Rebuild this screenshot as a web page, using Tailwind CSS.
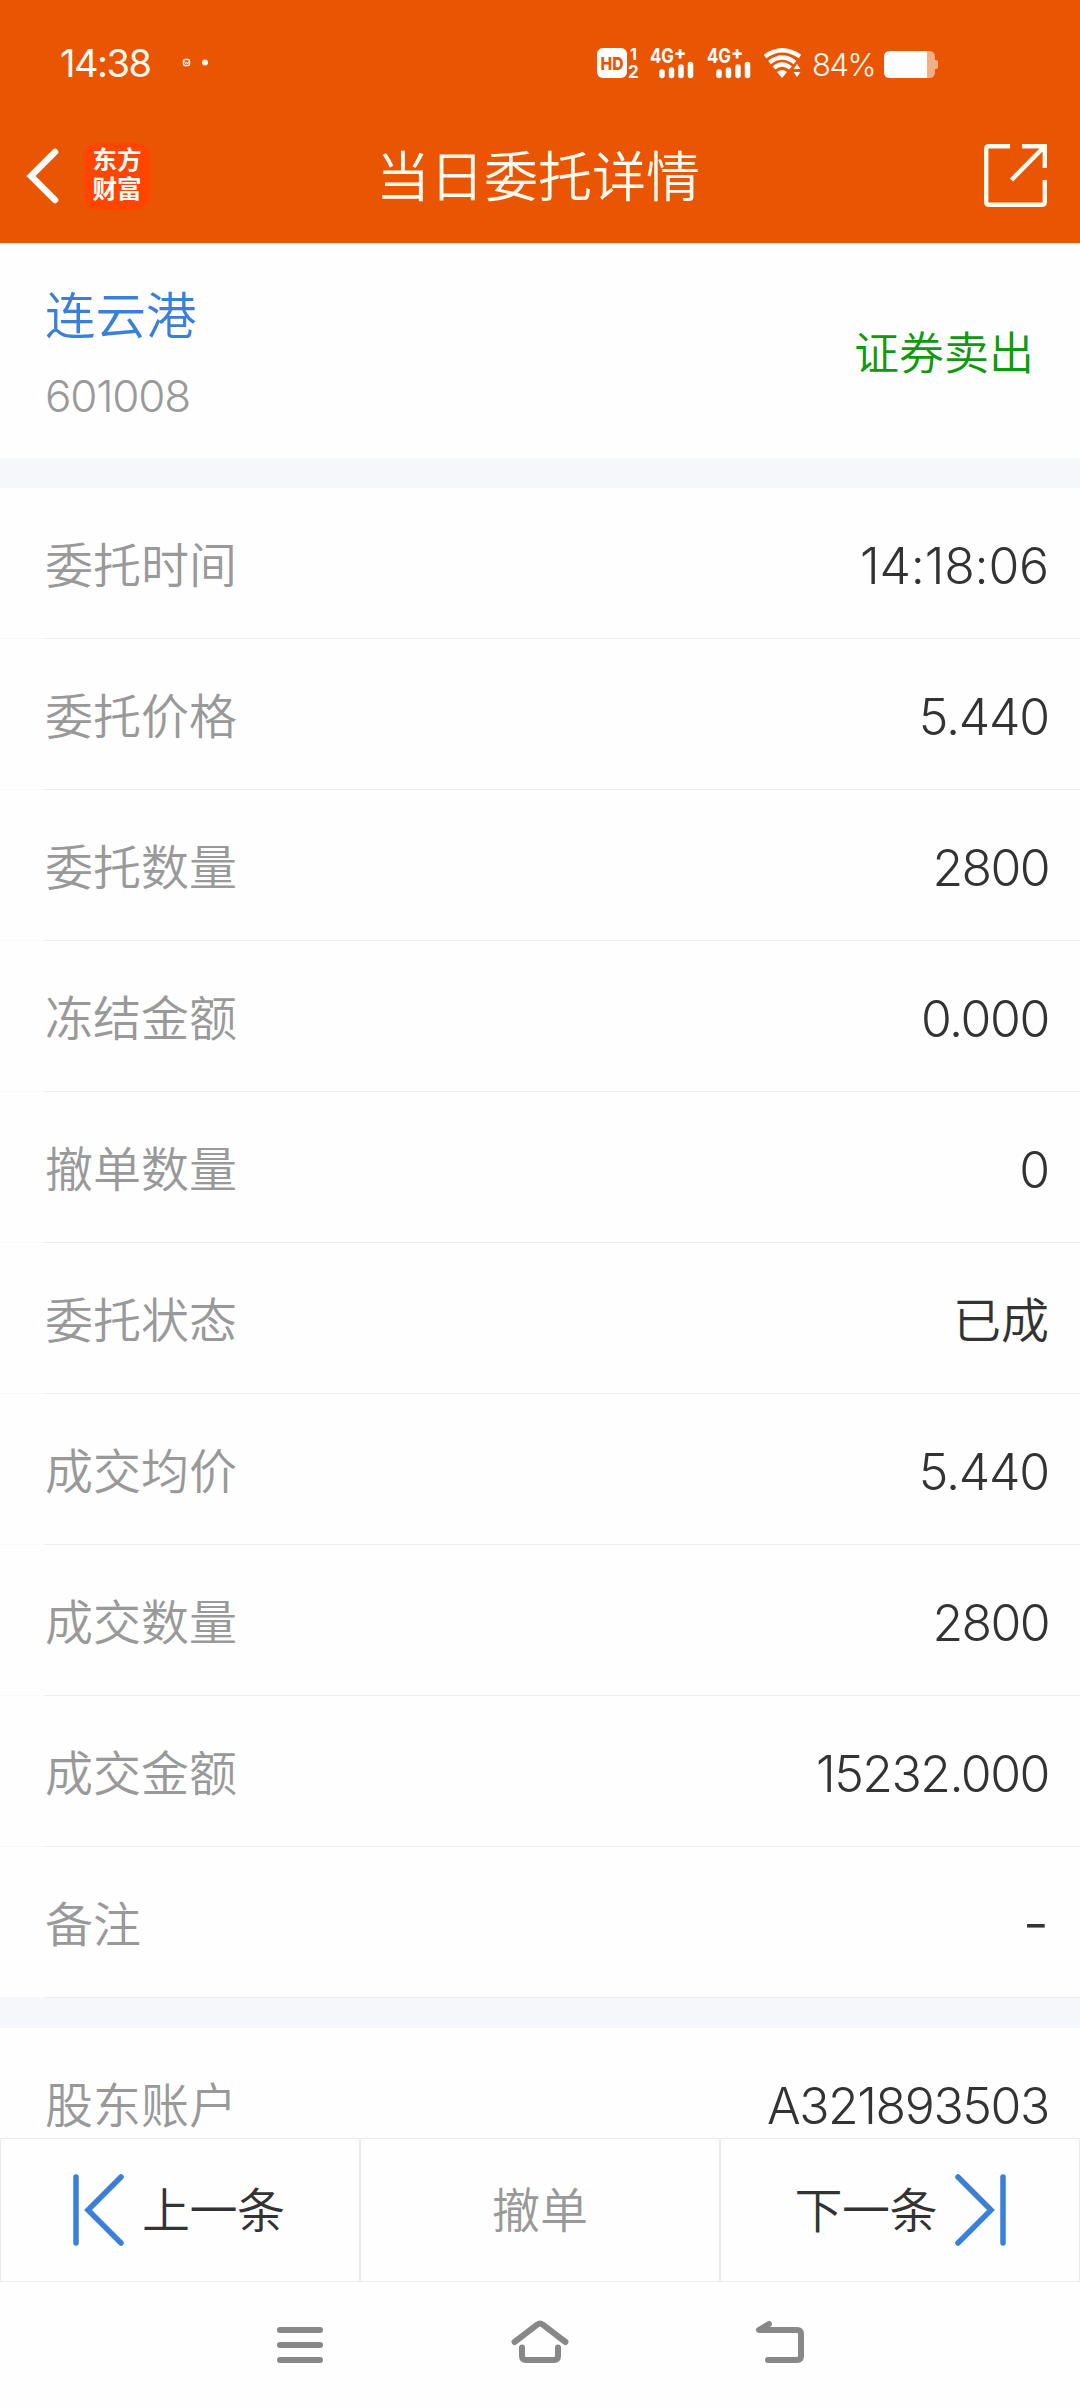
<!DOCTYPE html>
<html lang="zh-CN">
<head>
	<meta charset="UTF-8">
	<meta name="viewport" content="width=device-width, initial-scale=1.0">
	<title>当日委托详情</title>
	<script src="https://cdn.jsdelivr.net/npm/@tailwindcss/browser@4"></script>
</head>
<body class="bg-white">
	<div class="w-[1080px] h-[2408px] flex flex-col overflow-hidden bg-[#fefefe] font-['Inter','Noto_Sans_CJK_SC',sans-serif] font-[350] text-[#333]">
		<header class="h-[243px] shrink-0 bg-[#ea5504] text-[#fffaf0]">
			<!-- Status bar -->
			<div class="h-[126px] pl-[60px] flex items-center">
				<span class="w-[92px] text-[38px] leading-none font-normal tracking-[-1.5px]">14:38</span>
				<svg class="ml-[30px]" width="28" height="10" viewBox="0 0 28 10">
					<rect x="1.5" y="1.5" width="6" height="6" rx="1.5" fill="none" stroke="#fffaf0" stroke-width="1.4" />
					<path d="M2.5 3l1.2 3 1-2 1 2 1.2-3" fill="none" stroke="#fffaf0" stroke-width=".8" />
					<circle cx="23" cy="4.5" r="3" fill="#fffaf0" />
				</svg>
				<svg class="ml-[387px] overflow-visible" width="43" height="30" viewBox="0 0 43 30">
					<rect width="30" height="30" rx="6" fill="#fff" />
					<text x="3.500" y="21.500" font-size="18" font-weight="800" fill="#ea5504" textLength="23" lengthAdjust="spacingAndGlyphs">HD</text>
					<text x="33" y="11.500" font-size="16" font-weight="700" fill="#fff">1</text>
					<text x="31" y="29.500" font-size="17" font-weight="700" fill="#fff">2</text>
				</svg>
				<svg class="ml-[10px] overflow-visible" width="46" height="30" viewBox="0 0 46 30">
					<text x="0" y="14.5" font-size="20" font-weight="700" fill="#fff" textLength="24" lengthAdjust="spacingAndGlyphs">4G</text>
					<text x="24" y="11" font-size="18" font-weight="800" fill="#fff">+</text>
					<path d="M12 24v3.5M21.500 22v5.500M31 19v8.500M40.500 16.500v11" fill="none" stroke="#fff" stroke-width="5.500" stroke-linecap="round" />
				</svg>
				<svg class="ml-[11px] overflow-visible" width="46" height="30" viewBox="0 0 46 30">
					<text x="0" y="14.5" font-size="20" font-weight="700" fill="#fff" textLength="24" lengthAdjust="spacingAndGlyphs">4G</text>
					<text x="24" y="11" font-size="18" font-weight="800" fill="#fff">+</text>
					<path d="M12 24v3.5M21.500 22v5.500M31 19v8.500M40.500 16.500v11" fill="none" stroke="#fff" stroke-width="5.500" stroke-linecap="round" />
				</svg>
				<svg class="ml-[11px]" width="38" height="30" viewBox="0 0 38 30">
					<path d="M1 8.500Q18 -4 36 8.500M5.500 14.500Q18 4.500 31 14.500M10 20Q18 13 26.500 20" fill="none" stroke="#fff" stroke-width="4.200" />
					<path d="M13 24q5-4 10 0l-5 6z" fill="#fff" />
					<path d="M33 16l3.500 5h-7zM33 29l3.500-5h-7z" fill="#fff" />
				</svg>
				<span class="ml-[10px] w-[62px] text-[31px] leading-none tracking-[-1.5px] pt-[2px]">84%</span>
				<svg class="ml-[10px] mt-[3px]" width="54" height="27" viewBox="0 0 54 27">
					<path d="M43 0h2q6 0 6 6v3h1q2 0 2 2v5q0 2-2 2h-1v3q0 6-6 6h-2z" fill="#f7ad84" />
					<path d="M6 0h37v27H6q-6 0-6-6V6q0-6 6-6z" fill="#fff" />
				</svg>
			</div>
			<!-- Title bar -->
			<div class="h-[100px] grid grid-cols-[1fr_auto_1fr] items-center">
				<div class="flex items-center pl-[26px]">
					<svg width="34" height="56" viewBox="0 0 34 56">
						<path d="M29 4L5 28l24 24" fill="none" stroke="#fff" stroke-width="6.500" stroke-linecap="round" />
					</svg>
					<div class="ml-6 w-[66px] h-[67px] rounded-[14px] bg-[#ff4500] flex flex-col items-center justify-center pb-0.5 text-[24.5px] leading-[29.5px] font-bold text-white">
						<span>东方</span>
						<span>财富</span>
					</div>
				</div>
				<h1 class="pt-1 -ml-0.5 mr-0.5 text-[54px] leading-[60px]">当日委托详情</h1>
				<div class="flex justify-end pr-[33px] pb-0.5">
					<svg width="63" height="63" viewBox="0 0 63 63">
						<path d="M26 2.200H5Q2.200 2.200 2.200 5V58Q2.200 60.800 5 60.800H58Q60.800 60.800 60.800 58V36M38 2.200H60.800V24M60 3L27.500 36" fill="none" stroke="#fffaf0" stroke-width="4.400" />
					</svg>
				</div>
			</div>
		</header>

		<main class="h-[1895px] shrink-0 overflow-hidden">
			<section class="h-[215px] pt-1.5 px-[45px] flex items-center justify-between">
				<div class="flex flex-col">
					<span class="text-[50.5px] leading-[60px] text-[#3a80d9]">连云港</span>
					<span class="mt-6 text-[44px] leading-[52px] tracking-[-1.200px] text-[#999]">601008</span>
				</div>
				<span class="-mr-px pr-0.5 text-[45px] leading-none text-[#0f990f]">证券卖出</span>
			</section>
			<div class="h-[30px] bg-[#f6f7fa]"></div>

			<!-- Order fields -->
			<dl class="text-[48px] leading-none">
				<div class="h-[151px] flex">
					<div class="w-[45px] border-b border-[#f9f9fa]"></div>
					<div class="flex-1 pt-[5px] pr-[31px] flex items-center justify-between border-b border-[#ececee]">
						<dt class="text-[#999]">委托时间</dt>
						<dd class="text-[50px] tracking-[-.2px]">14:18:06</dd>
					</div>
				</div>
				<div class="h-[151px] flex">
					<div class="w-[45px] border-b border-[#f9f9fa]"></div>
					<div class="flex-1 pt-[5px] pr-[31px] flex items-center justify-between border-b border-[#ececee]">
						<dt class="text-[#999]">委托价格</dt>
						<dd class="text-[50px] tracking-[-1.200px]">5.440</dd>
					</div>
				</div>
				<div class="h-[151px] flex">
					<div class="w-[45px] border-b border-[#f9f9fa]"></div>
					<div class="flex-1 pt-[5px] pr-[31px] flex items-center justify-between border-b border-[#ececee]">
						<dt class="text-[#999]">委托数量</dt>
						<dd class="text-[50px] tracking-[-1.600px]">2800</dd>
					</div>
				</div>
				<div class="h-[151px] flex">
					<div class="w-[45px] border-b border-[#f9f9fa]"></div>
					<div class="flex-1 pt-[5px] pr-[31px] flex items-center justify-between border-b border-[#ececee]">
						<dt class="text-[#999]">冻结金额</dt>
						<dd class="text-[50px] tracking-[-1.400px]">0.000</dd>
					</div>
				</div>
				<div class="h-[151px] flex">
					<div class="w-[45px] border-b border-[#f9f9fa]"></div>
					<div class="flex-1 pt-[5px] pr-[31px] flex items-center justify-between border-b border-[#ececee]">
						<dt class="text-[#999]">撤单数量</dt>
						<dd class="text-[50px] tracking-[-1.200px]">0</dd>
					</div>
				</div>
				<div class="h-[151px] flex">
					<div class="w-[45px] border-b border-[#f9f9fa]"></div>
					<div class="flex-1 pt-[5px] pr-[31px] flex items-center justify-between border-b border-[#ececee]">
						<dt class="text-[#999]">委托状态</dt>
						<dd>已成</dd>
					</div>
				</div>
				<div class="h-[151px] flex">
					<div class="w-[45px] border-b border-[#f9f9fa]"></div>
					<div class="flex-1 pt-[5px] pr-[31px] flex items-center justify-between border-b border-[#ececee]">
						<dt class="text-[#999]">成交均价</dt>
						<dd class="text-[50px] tracking-[-1.200px]">5.440</dd>
					</div>
				</div>
				<div class="h-[151px] flex">
					<div class="w-[45px] border-b border-[#f9f9fa]"></div>
					<div class="flex-1 pt-[5px] pr-[31px] flex items-center justify-between border-b border-[#ececee]">
						<dt class="text-[#999]">成交数量</dt>
						<dd class="text-[50px] tracking-[-1.600px]">2800</dd>
					</div>
				</div>
				<div class="h-[151px] flex">
					<div class="w-[45px] border-b border-[#f9f9fa]"></div>
					<div class="flex-1 pt-[5px] pr-[31px] flex items-center justify-between border-b border-[#ececee]">
						<dt class="text-[#999]">成交金额</dt>
						<dd class="text-[50px] tracking-[-1.500px]">15232.000</dd>
					</div>
				</div>
				<div class="h-[151px] flex">
					<div class="w-[45px] border-b border-[#f6f7fa]"></div>
					<div class="flex-1 pt-[5px] pr-[31px] flex items-center justify-between border-b border-[#ececee]">
						<dt class="text-[#999]">备注</dt>
						<dd class="pb-1 text-[58px] font-light">-</dd>
					</div>
				</div>
			</dl>
			<div class="h-[30px] bg-[#f6f7fa]"></div>
			<div class="h-[151px] pl-[45px] pr-[31px] pt-1 flex items-center justify-between text-[48px] leading-none">
				<span class="text-[#999]">股东账户</span>
				<span class="text-[50px] tracking-[-1.400px]">A321893503</span>
			</div>
		</main>

		<!-- Order actions -->
		<div class="h-[144px] shrink-0 grid grid-cols-3 text-[48px] leading-none">
			<button class="border border-[#ececec] flex items-center pl-[71px]">
				<svg width="54" height="74" viewBox="0 0 54 74">
					<path d="M4 4v66M49 4L16 37l33 33" fill="none" stroke="#3a80d9" stroke-width="5.500" stroke-linecap="round" />
				</svg>
				<span class="ml-4 pt-0.5 tracking-[-.5px]">上一条</span>
			</button>
			<button class="border border-[#ececec] pt-0.5 text-[#999]">撤单</button>
			<button class="border border-[#ececec] flex items-center justify-end pr-[72px]">
				<span class="mr-4 pt-0.5 tracking-[-.5px]">下一条</span>
				<svg width="54" height="74" viewBox="0 0 54 74">
					<path d="M50 4v66M5 4l33 33L5 70" fill="none" stroke="#3a80d9" stroke-width="5.500" stroke-linecap="round" />
				</svg>
			</button>
		</div>

		<!-- System navigation -->
		<nav class="flex-1 pt-[36px] flex justify-center gap-[180px]">
			<svg width="60" height="50" viewBox="0 0 60 50">
				<path d="M10 12h40M10 27h40M10 42h40" fill="none" stroke="#888" stroke-width="6" stroke-linecap="round" />
			</svg>
			<svg width="60" height="50" viewBox="0 0 60 50">
				<path d="M4.500 24L27.500 6.500q2.500-2 5 0L55.500 24M12 29.500V38q0 4 4 4h28q4 0 4-4v-8.500" fill="none" stroke="#888" stroke-width="6" stroke-linecap="round" />
			</svg>
			<svg width="60" height="50" viewBox="0 0 60 50">
				<path d="M19 6L9 12H47q4 0 4 4V38q0 4-4 4H18" fill="none" stroke="#888" stroke-width="6" stroke-linecap="round" stroke-linejoin="round" />
			</svg>
		</nav>
	</div>
</body>
</html>
